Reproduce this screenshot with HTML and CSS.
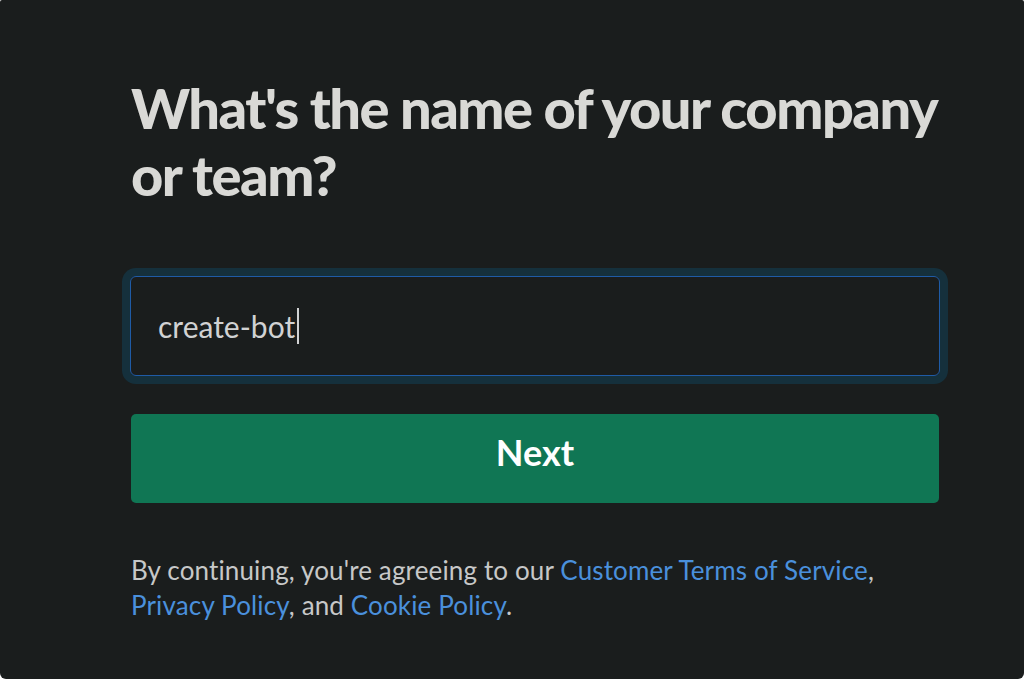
FILE: index.html
```html
<!DOCTYPE html>
<html>
<head>
<meta charset="utf-8">
<link rel="stylesheet" href="styles.css">
</head>
<body>
<div class="window">
  <div class="form">
    <h1 class="title">What's the name of your company or team?</h1>
    <div class="field">
      <span class="value">create-bot</span><span class="caret"></span>
    </div>
    <button class="next">Next</button>
    <p class="legal">By continuing, you're agreeing to our <a href="#">Customer Terms of Service</a>, <a href="#">Privacy Policy</a>, and <a href="#">Cookie Policy</a>.</p>
  </div>
</div>
</body>
</html>
```

FILE: styles.css
```css
html, body {
  margin: 0;
  padding: 0;
  background: #ffffff;
}
.window {
  height: 679px;
  background: #1a1d1d;
  border-radius: 2px 2px 6px 6px;
  box-sizing: border-box;
  padding: 74px 0 0 130px;
  font-family: Lato, "Noto Sans", sans-serif;
}
.form {
  width: 810px;
  display: flex;
  flex-direction: column;
}
.title {
  margin: 0 0 0 1px;
  font-size: 56px;
  line-height: 67px;
  font-weight: 900;
  color: #d9d9d6;
  letter-spacing: -1.5px;
}
.field {
  margin-top: 68px;
  height: 100px;
  box-sizing: border-box;
  border: 1px solid #1f5ba6;
  border-radius: 6px;
  box-shadow: 0 0 0 8px #15303c;
  display: flex;
  align-items: center;
  padding: 0 0 0 27px;
  font-size: 30px;
  color: #d1d2d3;
}
.caret {
  display: inline-block;
  width: 2px;
  height: 36px;
  background: #d1d2d3;
  margin-left: 2px;
}
.next {
  margin: 38px 1px 0 1px;
  height: 89px;
  border: none;
  border-radius: 5px;
  background: #107654;
  color: #ffffff;
  font-family: Lato, "Noto Sans", sans-serif;
  font-weight: 700;
  font-size: 36px;
  padding: 0 0 14px 0;
}
.legal {
  margin: 50px 0 0 1px;
  font-size: 26px;
  line-height: 35px;
  letter-spacing: 0.14px;
  color: #c7c8c8;
}
.legal a {
  color: #4a90dc;
  text-decoration: none;
}
```
